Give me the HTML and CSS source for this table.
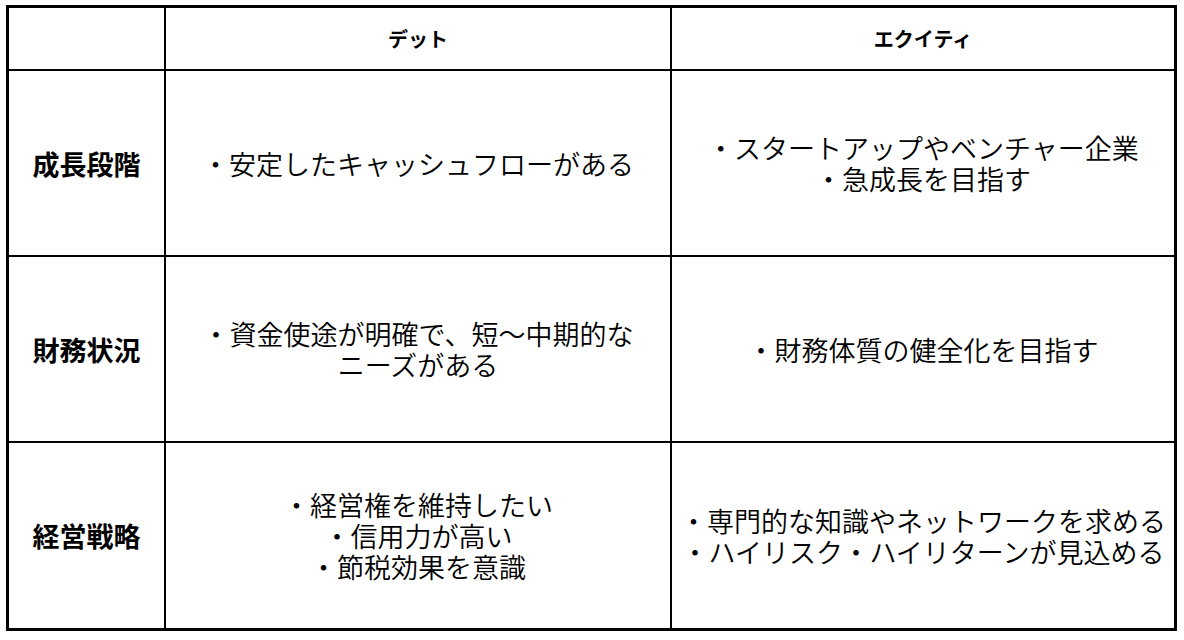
FILE: index.html
```html
<!DOCTYPE html>
<html lang="ja">
<head>
<meta charset="utf-8">
<link rel="stylesheet" href="styles.css">
</head>
<body>
<div class="table">
  <div class="cell head"></div>
  <div class="cell head">デット</div>
  <div class="cell head last-col">エクイティ</div>

  <div class="cell label">成長段階</div>
  <div class="cell">・安定したキャッシュフローがある</div>
  <div class="cell last-col">・スタートアップやベンチャー企業<br>・急成長を目指す</div>

  <div class="cell label">財務状況</div>
  <div class="cell">・資金使途が明確で、短〜中期的な<br>ニーズがある</div>
  <div class="cell last-col">・財務体質の健全化を目指す</div>

  <div class="cell label last-row">経営戦略</div>
  <div class="cell last-row">・経営権を維持したい<br>・信用力が高い<br>・節税効果を意識</div>
  <div class="cell last-row last-col">・専門的な知識やネットワークを求める<br>・ハイリスク・ハイリターンが見込める</div>
</div>
</body>
</html>
```

FILE: styles.css
```css
html, body {
  margin: 0;
  padding: 0;
  background: #ffffff;
}
body {
  padding: 5px 0 0 6px;
  font-family: "Noto Sans CJK JP", "Noto Sans", sans-serif;
  color: #000;
}
.table {
  width: 1171px;
  box-sizing: border-box;
  border: 3px solid #000;
  display: grid;
  grid-template-columns: 157px 506px 502px;
  grid-template-rows: 63px 186px 186px 185px;
}
.cell {
  border-right: 2px solid #000;
  border-bottom: 2px solid #000;
  display: flex;
  align-items: center;
  justify-content: center;
  text-align: center;
  font-size: 27px;
  font-weight: 350;
  line-height: 31px;
}
.cell.last-col { border-right: none; }
.cell.last-row { border-bottom: none; }
.head {
  font-size: 20px;
  font-weight: 700;
}
.label {
  font-weight: 700;
}
```
